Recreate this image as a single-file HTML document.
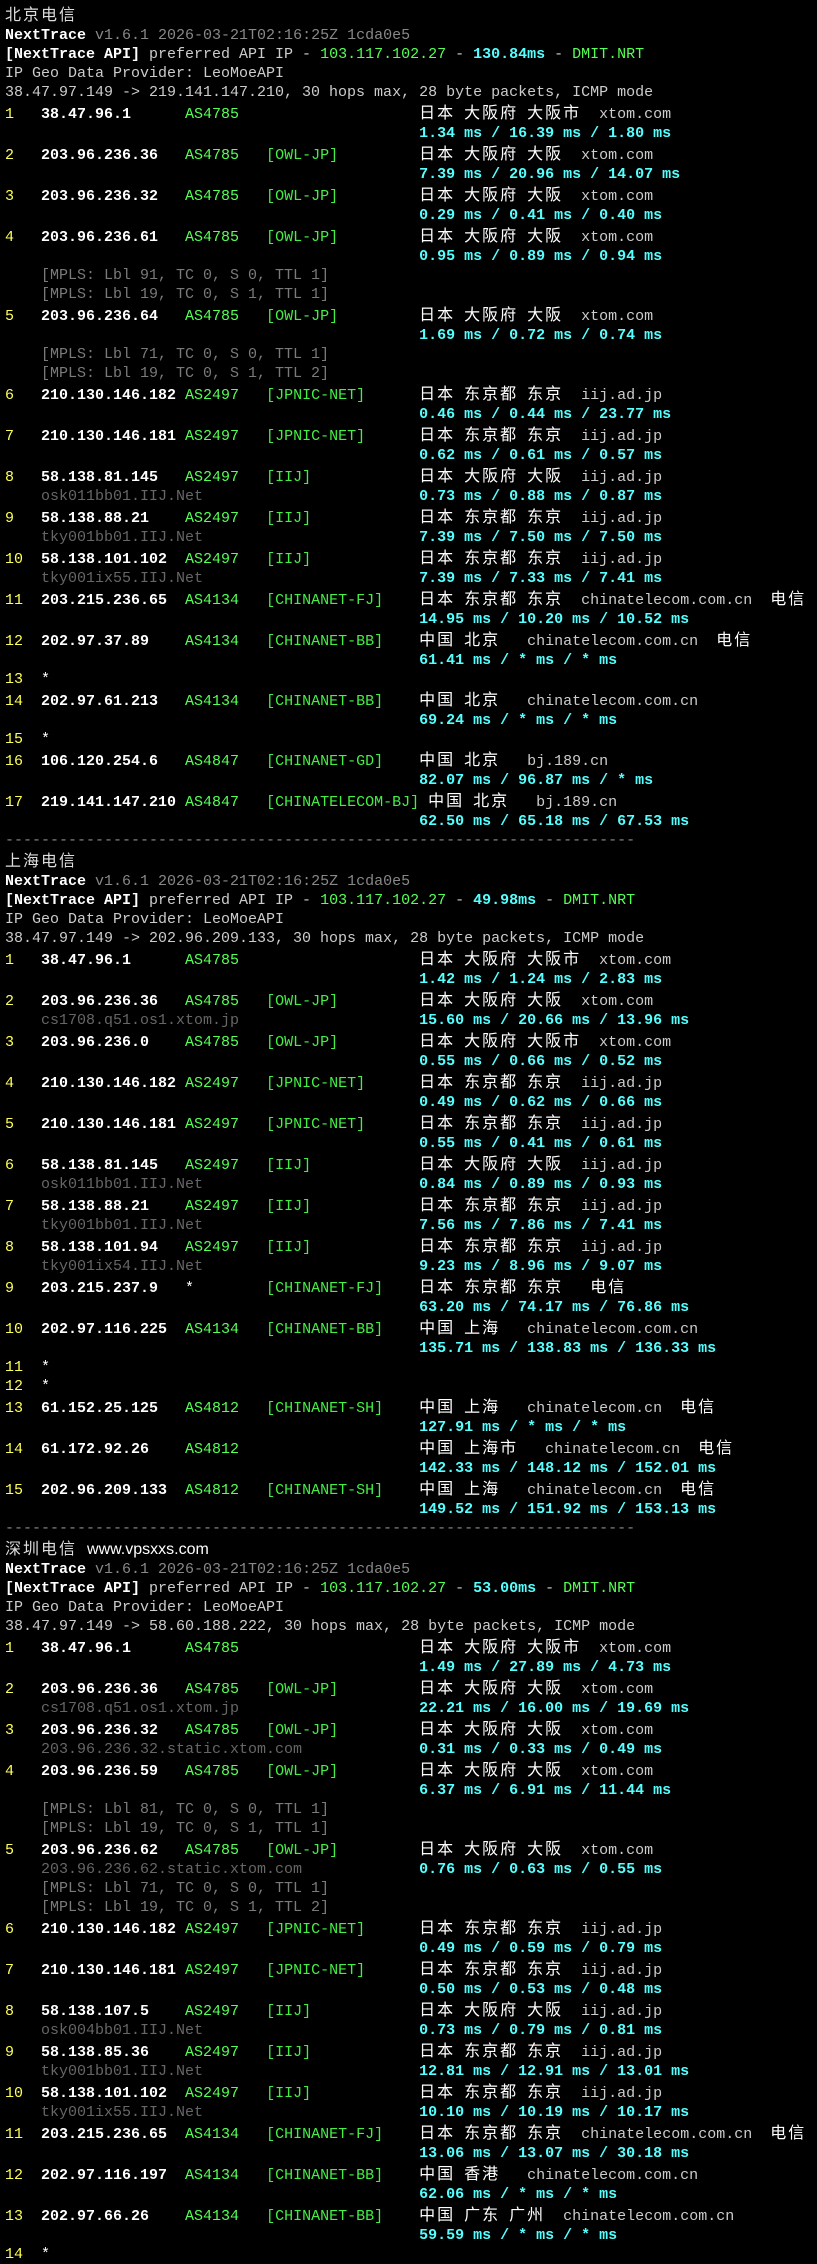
<!DOCTYPE html>
<html><head><meta charset="utf-8"><style>
html,body{margin:0;padding:0;background:#000;}
body{width:817px;height:2136px;overflow:hidden;}
pre{margin:0;padding:4px 0 0 5px;font-family:"Liberation Mono","Noto Sans CJK SC",monospace;font-size:15px;line-height:19px;color:#ccc;white-space:pre;}
.y{color:#ffff55}
.w{color:#fff;font-weight:bold}
.g{color:#55ff55}
.t{color:#44ee44}
.c{color:#55ffff;font-weight:bold}
.d{color:#666}
.m{color:#7a7a7a}
.v{color:#888}
.l{color:#ccc}
.e{color:#fff}
.k{font-family:"Noto Sans CJK SC","WenQuanYi Zen Hei",sans-serif;font-size:16px;letter-spacing:2px;line-height:19px;color:#fff}
.h{font-family:"Noto Sans CJK SC",sans-serif;font-size:16px;letter-spacing:2px;color:#ddd;line-height:19px}
.wm{font-family:"Liberation Sans",sans-serif;font-size:16px;color:#fff;margin-left:10px}
</style></head><body><pre><span class="h">北京电信</span>
<span class="w">NextTrace</span> <span class="v">v1.6.1 2026-03-21T02:16:25Z 1cda0e5</span>
<span class="w">[NextTrace API]</span> preferred API IP - <span class="g">103.117.102.27</span> - <span class="c">130.84ms</span> - <span class="g">DMIT.NRT</span>
IP Geo Data Provider: LeoMoeAPI
38.47.97.149 -&gt; 219.141.147.210, 30 hops max, 28 byte packets, ICMP mode
<span class="y">1   </span><span class="w">38.47.96.1      </span><span class="g">AS4785   </span>                 <span class="k">日本</span> <span class="k">大阪府</span> <span class="k">大阪市</span>  xtom.com
                                              <span class="c">1.34 ms / 16.39 ms / 1.80 ms</span>
<span class="y">2   </span><span class="w">203.96.236.36   </span><span class="g">AS4785   </span><span class="t">[OWL-JP]         </span><span class="k">日本</span> <span class="k">大阪府</span> <span class="k">大阪</span>  xtom.com
                                              <span class="c">7.39 ms / 20.96 ms / 14.07 ms</span>
<span class="y">3   </span><span class="w">203.96.236.32   </span><span class="g">AS4785   </span><span class="t">[OWL-JP]         </span><span class="k">日本</span> <span class="k">大阪府</span> <span class="k">大阪</span>  xtom.com
                                              <span class="c">0.29 ms / 0.41 ms / 0.40 ms</span>
<span class="y">4   </span><span class="w">203.96.236.61   </span><span class="g">AS4785   </span><span class="t">[OWL-JP]         </span><span class="k">日本</span> <span class="k">大阪府</span> <span class="k">大阪</span>  xtom.com
                                              <span class="c">0.95 ms / 0.89 ms / 0.94 ms</span>
<span class="m">    [MPLS: Lbl 91, TC 0, S 0, TTL 1]</span>
<span class="m">    [MPLS: Lbl 19, TC 0, S 1, TTL 1]</span>
<span class="y">5   </span><span class="w">203.96.236.64   </span><span class="g">AS4785   </span><span class="t">[OWL-JP]         </span><span class="k">日本</span> <span class="k">大阪府</span> <span class="k">大阪</span>  xtom.com
                                              <span class="c">1.69 ms / 0.72 ms / 0.74 ms</span>
<span class="m">    [MPLS: Lbl 71, TC 0, S 0, TTL 1]</span>
<span class="m">    [MPLS: Lbl 19, TC 0, S 1, TTL 2]</span>
<span class="y">6   </span><span class="w">210.130.146.182 </span><span class="g">AS2497   </span><span class="t">[JPNIC-NET]      </span><span class="k">日本</span> <span class="k">东京都</span> <span class="k">东京</span>  iij.ad.jp
                                              <span class="c">0.46 ms / 0.44 ms / 23.77 ms</span>
<span class="y">7   </span><span class="w">210.130.146.181 </span><span class="g">AS2497   </span><span class="t">[JPNIC-NET]      </span><span class="k">日本</span> <span class="k">东京都</span> <span class="k">东京</span>  iij.ad.jp
                                              <span class="c">0.62 ms / 0.61 ms / 0.57 ms</span>
<span class="y">8   </span><span class="w">58.138.81.145   </span><span class="g">AS2497   </span><span class="t">[IIJ]            </span><span class="k">日本</span> <span class="k">大阪府</span> <span class="k">大阪</span>  iij.ad.jp
    <span class="d">osk011bb01.IIJ.Net                        </span><span class="c">0.73 ms / 0.88 ms / 0.87 ms</span>
<span class="y">9   </span><span class="w">58.138.88.21    </span><span class="g">AS2497   </span><span class="t">[IIJ]            </span><span class="k">日本</span> <span class="k">东京都</span> <span class="k">东京</span>  iij.ad.jp
    <span class="d">tky001bb01.IIJ.Net                        </span><span class="c">7.39 ms / 7.50 ms / 7.50 ms</span>
<span class="y">10  </span><span class="w">58.138.101.102  </span><span class="g">AS2497   </span><span class="t">[IIJ]            </span><span class="k">日本</span> <span class="k">东京都</span> <span class="k">东京</span>  iij.ad.jp
    <span class="d">tky001ix55.IIJ.Net                        </span><span class="c">7.39 ms / 7.33 ms / 7.41 ms</span>
<span class="y">11  </span><span class="w">203.215.236.65  </span><span class="g">AS4134   </span><span class="t">[CHINANET-FJ]    </span><span class="k">日本</span> <span class="k">东京都</span> <span class="k">东京</span>  chinatelecom.com.cn  <span class="k">电信</span>
                                              <span class="c">14.95 ms / 10.20 ms / 10.52 ms</span>
<span class="y">12  </span><span class="w">202.97.37.89    </span><span class="g">AS4134   </span><span class="t">[CHINANET-BB]    </span><span class="k">中国</span> <span class="k">北京</span>   chinatelecom.com.cn  <span class="k">电信</span>
                                              <span class="c">61.41 ms / * ms / * ms</span>
<span class="y">13  </span><span class="e">*</span>
<span class="y">14  </span><span class="w">202.97.61.213   </span><span class="g">AS4134   </span><span class="t">[CHINANET-BB]    </span><span class="k">中国</span> <span class="k">北京</span>   chinatelecom.com.cn
                                              <span class="c">69.24 ms / * ms / * ms</span>
<span class="y">15  </span><span class="e">*</span>
<span class="y">16  </span><span class="w">106.120.254.6   </span><span class="g">AS4847   </span><span class="t">[CHINANET-GD]    </span><span class="k">中国</span> <span class="k">北京</span>   bj.189.cn
                                              <span class="c">82.07 ms / 96.87 ms / * ms</span>
<span class="y">17  </span><span class="w">219.141.147.210 </span><span class="g">AS4847   </span><span class="t">[CHINATELECOM-BJ]</span> <span class="k">中国</span> <span class="k">北京</span>   bj.189.cn
                                              <span class="c">62.50 ms / 65.18 ms / 67.53 ms</span>
<span class="v">----------------------------------------------------------------------</span>
<span class="h">上海电信</span>
<span class="w">NextTrace</span> <span class="v">v1.6.1 2026-03-21T02:16:25Z 1cda0e5</span>
<span class="w">[NextTrace API]</span> preferred API IP - <span class="g">103.117.102.27</span> - <span class="c">49.98ms</span> - <span class="g">DMIT.NRT</span>
IP Geo Data Provider: LeoMoeAPI
38.47.97.149 -&gt; 202.96.209.133, 30 hops max, 28 byte packets, ICMP mode
<span class="y">1   </span><span class="w">38.47.96.1      </span><span class="g">AS4785   </span>                 <span class="k">日本</span> <span class="k">大阪府</span> <span class="k">大阪市</span>  xtom.com
                                              <span class="c">1.42 ms / 1.24 ms / 2.83 ms</span>
<span class="y">2   </span><span class="w">203.96.236.36   </span><span class="g">AS4785   </span><span class="t">[OWL-JP]         </span><span class="k">日本</span> <span class="k">大阪府</span> <span class="k">大阪</span>  xtom.com
    <span class="d">cs1708.q51.os1.xtom.jp                    </span><span class="c">15.60 ms / 20.66 ms / 13.96 ms</span>
<span class="y">3   </span><span class="w">203.96.236.0    </span><span class="g">AS4785   </span><span class="t">[OWL-JP]         </span><span class="k">日本</span> <span class="k">大阪府</span> <span class="k">大阪市</span>  xtom.com
                                              <span class="c">0.55 ms / 0.66 ms / 0.52 ms</span>
<span class="y">4   </span><span class="w">210.130.146.182 </span><span class="g">AS2497   </span><span class="t">[JPNIC-NET]      </span><span class="k">日本</span> <span class="k">东京都</span> <span class="k">东京</span>  iij.ad.jp
                                              <span class="c">0.49 ms / 0.62 ms / 0.66 ms</span>
<span class="y">5   </span><span class="w">210.130.146.181 </span><span class="g">AS2497   </span><span class="t">[JPNIC-NET]      </span><span class="k">日本</span> <span class="k">东京都</span> <span class="k">东京</span>  iij.ad.jp
                                              <span class="c">0.55 ms / 0.41 ms / 0.61 ms</span>
<span class="y">6   </span><span class="w">58.138.81.145   </span><span class="g">AS2497   </span><span class="t">[IIJ]            </span><span class="k">日本</span> <span class="k">大阪府</span> <span class="k">大阪</span>  iij.ad.jp
    <span class="d">osk011bb01.IIJ.Net                        </span><span class="c">0.84 ms / 0.89 ms / 0.93 ms</span>
<span class="y">7   </span><span class="w">58.138.88.21    </span><span class="g">AS2497   </span><span class="t">[IIJ]            </span><span class="k">日本</span> <span class="k">东京都</span> <span class="k">东京</span>  iij.ad.jp
    <span class="d">tky001bb01.IIJ.Net                        </span><span class="c">7.56 ms / 7.86 ms / 7.41 ms</span>
<span class="y">8   </span><span class="w">58.138.101.94   </span><span class="g">AS2497   </span><span class="t">[IIJ]            </span><span class="k">日本</span> <span class="k">东京都</span> <span class="k">东京</span>  iij.ad.jp
    <span class="d">tky001ix54.IIJ.Net                        </span><span class="c">9.23 ms / 8.96 ms / 9.07 ms</span>
<span class="y">9   </span><span class="w">203.215.237.9   </span><span class="e">*        </span><span class="t">[CHINANET-FJ]    </span><span class="k">日本</span> <span class="k">东京都</span> <span class="k">东京</span>   <span class="k">电信</span>
                                              <span class="c">63.20 ms / 74.17 ms / 76.86 ms</span>
<span class="y">10  </span><span class="w">202.97.116.225  </span><span class="g">AS4134   </span><span class="t">[CHINANET-BB]    </span><span class="k">中国</span> <span class="k">上海</span>   chinatelecom.com.cn
                                              <span class="c">135.71 ms / 138.83 ms / 136.33 ms</span>
<span class="y">11  </span><span class="e">*</span>
<span class="y">12  </span><span class="e">*</span>
<span class="y">13  </span><span class="w">61.152.25.125   </span><span class="g">AS4812   </span><span class="t">[CHINANET-SH]    </span><span class="k">中国</span> <span class="k">上海</span>   chinatelecom.cn  <span class="k">电信</span>
                                              <span class="c">127.91 ms / * ms / * ms</span>
<span class="y">14  </span><span class="w">61.172.92.26    </span><span class="g">AS4812   </span>                 <span class="k">中国</span> <span class="k">上海市</span>   chinatelecom.cn  <span class="k">电信</span>
                                              <span class="c">142.33 ms / 148.12 ms / 152.01 ms</span>
<span class="y">15  </span><span class="w">202.96.209.133  </span><span class="g">AS4812   </span><span class="t">[CHINANET-SH]    </span><span class="k">中国</span> <span class="k">上海</span>   chinatelecom.cn  <span class="k">电信</span>
                                              <span class="c">149.52 ms / 151.92 ms / 153.13 ms</span>
<span class="v">----------------------------------------------------------------------</span>
<span class="h">深圳电信</span><span class="wm">www.vpsxxs.com</span>
<span class="w">NextTrace</span> <span class="v">v1.6.1 2026-03-21T02:16:25Z 1cda0e5</span>
<span class="w">[NextTrace API]</span> preferred API IP - <span class="g">103.117.102.27</span> - <span class="c">53.00ms</span> - <span class="g">DMIT.NRT</span>
IP Geo Data Provider: LeoMoeAPI
38.47.97.149 -&gt; 58.60.188.222, 30 hops max, 28 byte packets, ICMP mode
<span class="y">1   </span><span class="w">38.47.96.1      </span><span class="g">AS4785   </span>                 <span class="k">日本</span> <span class="k">大阪府</span> <span class="k">大阪市</span>  xtom.com
                                              <span class="c">1.49 ms / 27.89 ms / 4.73 ms</span>
<span class="y">2   </span><span class="w">203.96.236.36   </span><span class="g">AS4785   </span><span class="t">[OWL-JP]         </span><span class="k">日本</span> <span class="k">大阪府</span> <span class="k">大阪</span>  xtom.com
    <span class="d">cs1708.q51.os1.xtom.jp                    </span><span class="c">22.21 ms / 16.00 ms / 19.69 ms</span>
<span class="y">3   </span><span class="w">203.96.236.32   </span><span class="g">AS4785   </span><span class="t">[OWL-JP]         </span><span class="k">日本</span> <span class="k">大阪府</span> <span class="k">大阪</span>  xtom.com
    <span class="d">203.96.236.32.static.xtom.com             </span><span class="c">0.31 ms / 0.33 ms / 0.49 ms</span>
<span class="y">4   </span><span class="w">203.96.236.59   </span><span class="g">AS4785   </span><span class="t">[OWL-JP]         </span><span class="k">日本</span> <span class="k">大阪府</span> <span class="k">大阪</span>  xtom.com
                                              <span class="c">6.37 ms / 6.91 ms / 11.44 ms</span>
<span class="m">    [MPLS: Lbl 81, TC 0, S 0, TTL 1]</span>
<span class="m">    [MPLS: Lbl 19, TC 0, S 1, TTL 1]</span>
<span class="y">5   </span><span class="w">203.96.236.62   </span><span class="g">AS4785   </span><span class="t">[OWL-JP]         </span><span class="k">日本</span> <span class="k">大阪府</span> <span class="k">大阪</span>  xtom.com
    <span class="d">203.96.236.62.static.xtom.com             </span><span class="c">0.76 ms / 0.63 ms / 0.55 ms</span>
<span class="m">    [MPLS: Lbl 71, TC 0, S 0, TTL 1]</span>
<span class="m">    [MPLS: Lbl 19, TC 0, S 1, TTL 2]</span>
<span class="y">6   </span><span class="w">210.130.146.182 </span><span class="g">AS2497   </span><span class="t">[JPNIC-NET]      </span><span class="k">日本</span> <span class="k">东京都</span> <span class="k">东京</span>  iij.ad.jp
                                              <span class="c">0.49 ms / 0.59 ms / 0.79 ms</span>
<span class="y">7   </span><span class="w">210.130.146.181 </span><span class="g">AS2497   </span><span class="t">[JPNIC-NET]      </span><span class="k">日本</span> <span class="k">东京都</span> <span class="k">东京</span>  iij.ad.jp
                                              <span class="c">0.50 ms / 0.53 ms / 0.48 ms</span>
<span class="y">8   </span><span class="w">58.138.107.5    </span><span class="g">AS2497   </span><span class="t">[IIJ]            </span><span class="k">日本</span> <span class="k">大阪府</span> <span class="k">大阪</span>  iij.ad.jp
    <span class="d">osk004bb01.IIJ.Net                        </span><span class="c">0.73 ms / 0.79 ms / 0.81 ms</span>
<span class="y">9   </span><span class="w">58.138.85.36    </span><span class="g">AS2497   </span><span class="t">[IIJ]            </span><span class="k">日本</span> <span class="k">东京都</span> <span class="k">东京</span>  iij.ad.jp
    <span class="d">tky001bb01.IIJ.Net                        </span><span class="c">12.81 ms / 12.91 ms / 13.01 ms</span>
<span class="y">10  </span><span class="w">58.138.101.102  </span><span class="g">AS2497   </span><span class="t">[IIJ]            </span><span class="k">日本</span> <span class="k">东京都</span> <span class="k">东京</span>  iij.ad.jp
    <span class="d">tky001ix55.IIJ.Net                        </span><span class="c">10.10 ms / 10.19 ms / 10.17 ms</span>
<span class="y">11  </span><span class="w">203.215.236.65  </span><span class="g">AS4134   </span><span class="t">[CHINANET-FJ]    </span><span class="k">日本</span> <span class="k">东京都</span> <span class="k">东京</span>  chinatelecom.com.cn  <span class="k">电信</span>
                                              <span class="c">13.06 ms / 13.07 ms / 30.18 ms</span>
<span class="y">12  </span><span class="w">202.97.116.197  </span><span class="g">AS4134   </span><span class="t">[CHINANET-BB]    </span><span class="k">中国</span> <span class="k">香港</span>   chinatelecom.com.cn
                                              <span class="c">62.06 ms / * ms / * ms</span>
<span class="y">13  </span><span class="w">202.97.66.26    </span><span class="g">AS4134   </span><span class="t">[CHINANET-BB]    </span><span class="k">中国</span> <span class="k">广东</span> <span class="k">广州</span>  chinatelecom.com.cn
                                              <span class="c">59.59 ms / * ms / * ms</span>
<span class="y">14  </span><span class="e">*</span></pre></body></html>
